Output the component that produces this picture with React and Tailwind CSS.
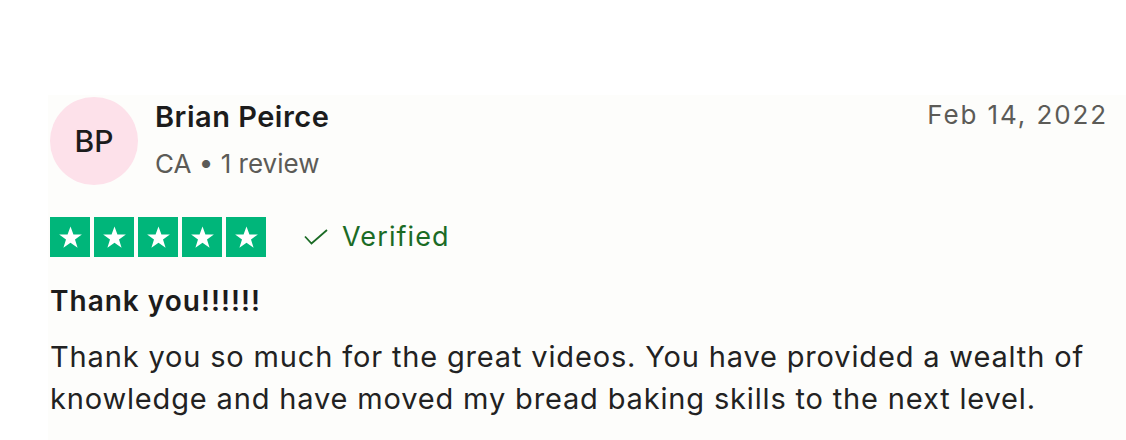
const Star = () => (
  <div className="w-10 h-10 bg-[#00b67a] flex items-center justify-center">
    <svg viewBox="0 0 24 24" className="w-[27px] h-[27px]" fill="#ffffff">
      <path d="M12 2.2l2.6 7.1h7.5l-6.1 4.5 2.3 7.3L12 16.6 5.7 21.1 8 13.8 1.9 9.3h7.5z" />
    </svg>
  </div>
);

export default function App() {
  return (
    <div className="w-[1126px] h-[440px] bg-white overflow-hidden font-['Inter',sans-serif] text-[#1c1c1c]">
      <div className="mt-[95px] ml-[48px] h-[345px] bg-[#fdfdfb] pl-[2px] pr-[18px]">
        {/* Header */}
        <div className="flex items-start">
          <div className="w-[88px] h-[88px] mt-[2px] rounded-full bg-[#fde1ea] flex items-center justify-center shrink-0">
            <span className="text-[30px] font-medium">BP</span>
          </div>
          <div className="ml-[17px] flex-1 pt-[4px]">
            <div className="text-[29px] font-semibold leading-[36px] tracking-[0.5px]">Brian Peirce</div>
            <div className="text-[26px] leading-[32px] mt-[13px] text-[#5c5b57]">CA • 1 review</div>
          </div>
          <div className="text-[26px] leading-[36px] pt-[2px] text-[#5c5b57] tracking-[1.9px]">Feb 14, 2022</div>
        </div>

        {/* Rating */}
        <div className="flex items-center mt-[32px]">
          <div className="flex gap-[4px]">
            <Star />
            <Star />
            <Star />
            <Star />
            <Star />
          </div>
          <div className="flex items-center ml-[38px] text-[#1b6b25]">
            <svg viewBox="0 0 24 16" className="w-[24px] h-[16px]" fill="none" stroke="currentColor" strokeWidth="1.8">
              <path d="M1 7.5l6.5 7L23 1" />
            </svg>
            <span className="ml-[14px] text-[27px] leading-[36px] tracking-[1.1px]">Verified</span>
          </div>
        </div>

        {/* Content */}
        <div className="mt-[27px] text-[28px] font-semibold leading-[34px] tracking-[1px]">Thank you!!!!!!</div>
        <p className="mt-[18px] text-[29px] leading-[42px] tracking-[0.84px] text-[#222]">
          Thank you so much for the great videos. You have provided a wealth of knowledge and have moved my bread baking skills to the next level.
        </p>
      </div>
    </div>
  );
}
